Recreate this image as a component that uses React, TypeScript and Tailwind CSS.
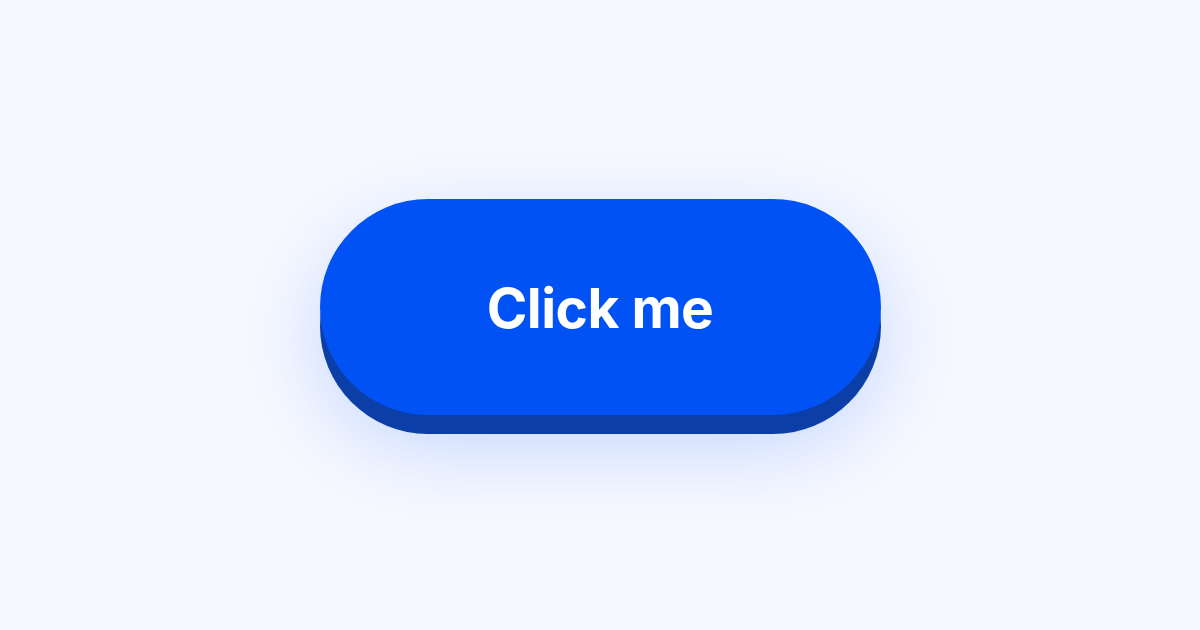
export default function App() {
  return (
    <div className="w-[1200px] h-[630px] bg-[#f7f9ff] flex items-center justify-center pb-[16px]" style={{ fontFamily: "Inter, 'Noto Sans', sans-serif" }}>
      <button className="w-[561px] h-[216px] rounded-full bg-[#0052f5] text-white text-[55px] font-bold tracking-[-0.5px] pt-[3px] shadow-[0_19px_0_#0b3ea6,0_30px_90px_rgba(0,82,245,0.22)]">
        Click me
      </button>
    </div>
  );
}
